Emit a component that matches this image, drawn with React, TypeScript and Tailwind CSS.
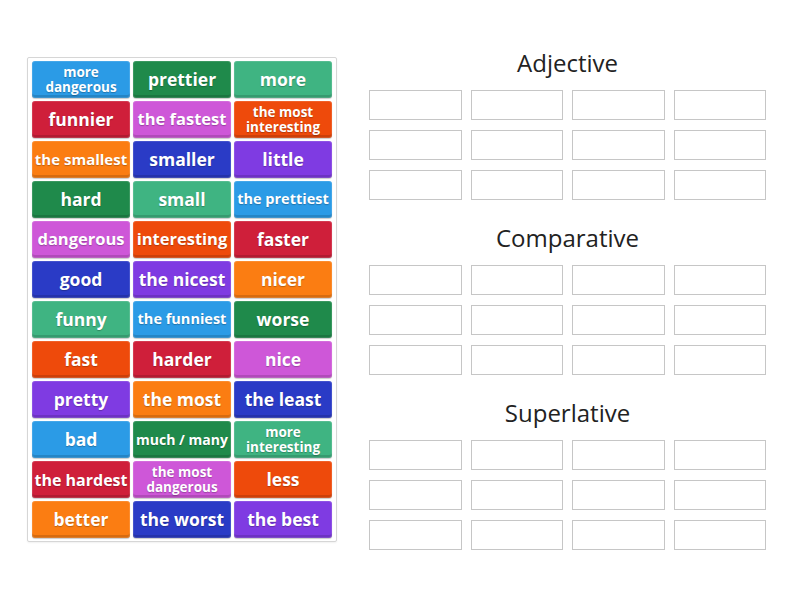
import React from 'react';

type Tile = { text: string; color: string; size?: string; two?: boolean };

const C = {
  blue: 'bg-[#2b9be6]',
  dkgreen: 'bg-[#1f8a4b]',
  green: 'bg-[#3fb482]',
  red: 'bg-[#cf1f3a]',
  pink: 'bg-[#ce57d8]',
  orangered: 'bg-[#ee4a0b]',
  orange: 'bg-[#fb7d12]',
  navy: 'bg-[#2a3bc6]',
  purple: 'bg-[#7f3be2]',
};

const tiles: Tile[] = [
  { text: 'more dangerous', color: C.blue, two: true },
  { text: 'prettier', color: C.dkgreen },
  { text: 'more', color: C.green },
  { text: 'funnier', color: C.red },
  { text: 'the fastest', color: C.pink, size: 'text-[16.5px]' },
  { text: 'the most interesting', color: C.orangered, two: true },
  { text: 'the smallest', color: C.orange, size: 'text-[15px]' },
  { text: 'smaller', color: C.navy },
  { text: 'little', color: C.purple },
  { text: 'hard', color: C.dkgreen },
  { text: 'small', color: C.green },
  { text: 'the prettiest', color: C.blue, size: 'text-[14.5px]' },
  { text: 'dangerous', color: C.pink, size: 'text-[16.5px]' },
  { text: 'interesting', color: C.orangered, size: 'text-[16.5px]' },
  { text: 'faster', color: C.red },
  { text: 'good', color: C.navy },
  { text: 'the nicest', color: C.purple },
  { text: 'nicer', color: C.orange },
  { text: 'funny', color: C.green },
  { text: 'the funniest', color: C.blue, size: 'text-[14.5px]' },
  { text: 'worse', color: C.dkgreen },
  { text: 'fast', color: C.orangered },
  { text: 'harder', color: C.red },
  { text: 'nice', color: C.pink },
  { text: 'pretty', color: C.purple },
  { text: 'the most', color: C.orange },
  { text: 'the least', color: C.navy },
  { text: 'bad', color: C.blue },
  { text: 'much / many', color: C.dkgreen, size: 'text-[14px]' },
  { text: 'more interesting', color: C.green, two: true },
  { text: 'the hardest', color: C.red, size: 'text-[16px]' },
  { text: 'the most dangerous', color: C.pink, two: true },
  { text: 'less', color: C.orangered },
  { text: 'better', color: C.orange },
  { text: 'the worst', color: C.navy },
  { text: 'the best', color: C.purple },
];

function Group({ title }: { title: string }) {
  return (
    <div className="flex flex-col">
      <div className="h-[36px] text-center text-[24px] leading-[36px] text-[#222]">{title}</div>
      <div className="mt-[9px] grid grid-cols-4 gap-x-[9px] gap-y-[10px]">
        {Array.from({ length: 12 }).map((_, i) => (
          <div key={i} className="h-[30px] border border-[#c6c6c6] bg-white" />
        ))}
      </div>
    </div>
  );
}

export default function App() {
  return (
    <div
      className="flex h-[600px] w-[800px] bg-white"
      style={{ fontFamily: '"Open Sans", "Noto Sans", sans-serif' }}
    >
      <div className="ml-[27px] mt-[57px] h-[485px] w-[310px] rounded-[2px] border border-[#d6d6d6] bg-white px-[4px] pt-[3px] shadow-[0_1px_2px_rgba(0,0,0,0.06)]">
        <div className="grid grid-cols-[repeat(3,98px)] gap-x-[3px] gap-y-[3px]">
          {tiles.map((t) => (
            <div
              key={t.text}
              className={`${t.color} flex h-[37px] items-center justify-center rounded-[3px] text-center font-bold text-white shadow-[inset_0_0_0_1px_rgba(255,255,255,0.12),inset_0_-3px_0_rgba(0,0,0,0.14),0_1px_1px_rgba(0,0,0,0.2)] [text-shadow:0_1px_1px_rgba(0,0,0,0.25)]`}
            >
              {t.two ? (
                <span className="block w-[86px] text-[13.5px] leading-[15px]">{t.text}</span>
              ) : (
                <span className={`${t.size ?? 'text-[17.5px]'} whitespace-nowrap leading-none`}>{t.text}</span>
              )}
            </div>
          ))}
        </div>
      </div>
      <div className="ml-[32px] mt-[45px] flex w-[397px] flex-col gap-[20px]">
        <Group title="Adjective" />
        <Group title="Comparative" />
        <Group title="Superlative" />
      </div>
    </div>
  );
}
